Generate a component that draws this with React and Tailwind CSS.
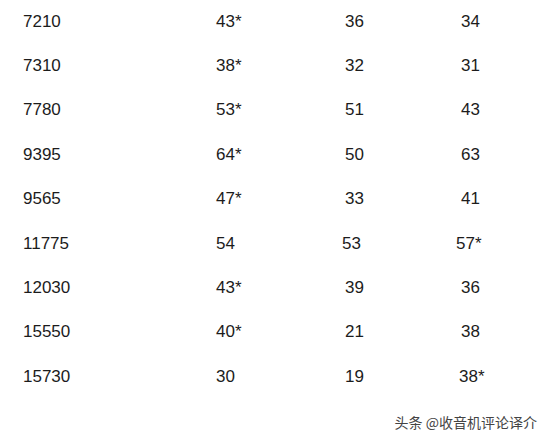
const rows = [
  ['7210', '43*', '36', '34'],
  ['7310', '38*', '32', '31'],
  ['7780', '53*', '51', '43'],
  ['9395', '64*', '50', '63'],
  ['9565', '47*', '33', '41'],
  ['11775', '54', '53', '57*', true],
  ['12030', '43*', '39', '36'],
  ['15550', '40*', '21', '38'],
  ['15730', '30', '19', '38*'],
];

export default function App() {
  return (
    <div className="relative h-[441px] w-[548px] overflow-hidden bg-white font-['Liberation_Sans',Arial,sans-serif] text-[17px] text-[#1c1c1c]">
      <div className="-mt-[1px] flex flex-col">
        {rows.map((r) => (
          <div key={r[0]} className="flex h-[44.4px] items-center leading-none">
            <span className="ml-[23px] w-[193px]">{r[0]}</span>
            <span className={r[4] ? 'w-[126px]' : 'w-[129px]'}>{r[1]}</span>
            <span className={r[4] ? 'w-[116px]' : 'w-[116px]'}>{r[2]}</span>
            <span className={r[3].endsWith('*') ? '-ml-[2px]' : ''}>{r[3]}</span>
          </div>
        ))}
      </div>
      <div className="absolute bottom-[12px] right-[11px] font-['Noto_Sans_CJK_SC',sans-serif] text-[14px] leading-none text-[#444]">
        头条 @收音机评论译介
      </div>
    </div>
  );
}
